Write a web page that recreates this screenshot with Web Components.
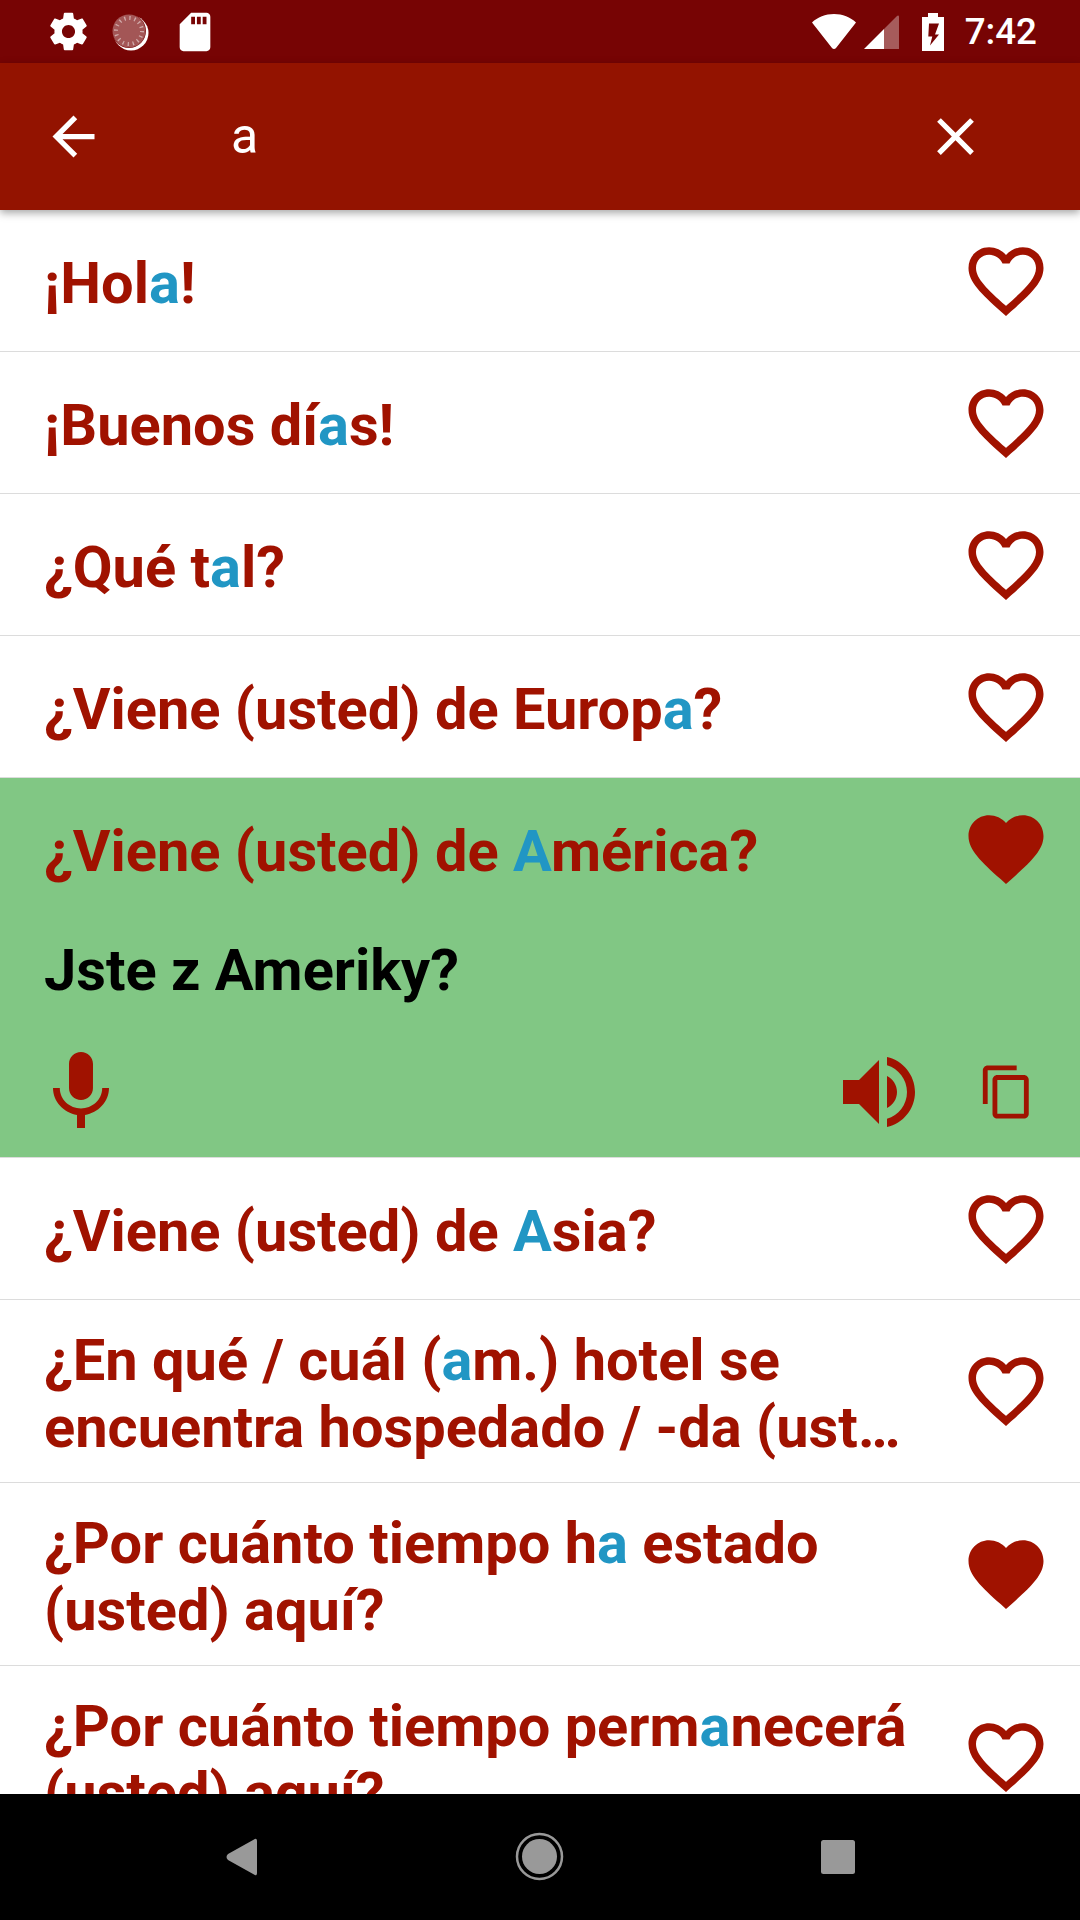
<!DOCTYPE html>
<html>
<head>
<meta charset="utf-8">
<title>Phrases</title>
<style>
html, body { margin: 0; padding: 0; background: #fff; }
body { font-family: Roboto, "Noto Sans", sans-serif; }
</style>
</head>
<body>
<phrase-app>
  <status-bar slot="status"></status-bar>
  <search-bar slot="search" query="a"></search-bar>

  <phrase-row>¡Hol<b>a</b>!</phrase-row>
  <phrase-row>¡Buenos dí<b>a</b>s!</phrase-row>
  <phrase-row>¿Qué t<b>a</b>l?</phrase-row>
  <phrase-row>¿Viene (usted) de Europ<b>a</b>?</phrase-row>
  <phrase-row selected liked translation="Jste z Ameriky?">¿Viene (usted) de <b>A</b>mérica?</phrase-row>
  <phrase-row>¿Viene (usted) de <b>A</b>sia?</phrase-row>
  <phrase-row>¿En qué / cuál (<b>a</b>m.) hotel se <i>encuentra hospedado / -da (usted)?</i></phrase-row>
  <phrase-row liked>¿Por cuánto tiempo h<b>a</b> estado (usted) aquí?</phrase-row>
  <phrase-row>¿Por cuánto tiempo perm<b>a</b>necerá (usted) aquí?</phrase-row>

  <nav-bar slot="nav"></nav-bar>
</phrase-app>

<script>
const ICONS = {
  gear: "M19.43 12.98c.04-.32.07-.64.07-.98s-.03-.66-.07-.98l2.11-1.65c.19-.15.24-.42.12-.64l-2-3.46c-.12-.22-.39-.3-.61-.22l-2.49 1c-.52-.4-1.08-.73-1.69-.98l-.38-2.65C14.46 2.18 14.25 2 14 2h-4c-.25 0-.46.18-.49.42l-.38 2.65c-.61.25-1.17.59-1.69.98l-2.49-1c-.23-.09-.49 0-.61.22l-2 3.46c-.13.22-.07.49.12.64l2.11 1.65c-.04.32-.07.65-.07.98s.03.66.07.98l-2.11 1.65c-.19.15-.24.42-.12.64l2 3.46c.12.22.39.3.61.22l2.49-1c.52.4 1.08.73 1.69.98l.38 2.65c.03.24.24.42.49.42h4c.25 0 .46-.18.49-.42l.38-2.65c.61-.25 1.17-.59 1.69-.98l2.49 1c.23.09.49 0 .61-.22l2-3.46c.12-.22.07-.49-.12-.64l-2.11-1.65zM12 15.5c-1.93 0-3.5-1.57-3.5-3.5s1.57-3.5 3.5-3.5 3.5 1.57 3.5 3.5-1.57 3.5-3.5 3.5z",
  sd: "M18 2h-8L4.02 8 4 20c0 1.1.9 2 2 2h12c1.1 0 2-.9 2-2V4c0-1.1-.9-2-2-2zm-6 6h-2V4h2v4zm3 0h-2V4h2v4zm3 0h-2V4h2v4z",
  back: "M20 11H7.83l5.59-5.59L12 4l-8 8 8 8 1.41-1.41L7.83 13H20v-2z",
  close: "M19 6.41L17.59 5 12 10.59 6.41 5 5 6.41 10.59 12 5 17.59 6.41 19 12 13.41 17.59 19 19 17.59 13.41 12z",
  heart: "M16.5 3c-1.74 0-3.41.81-4.5 2.09C10.91 3.81 9.24 3 7.5 3 4.42 3 2 5.42 2 8.5c0 3.78 3.4 6.86 8.55 11.54L12 21.35l1.45-1.32C18.6 15.36 22 12.28 22 8.5 22 5.42 19.58 3 16.5 3zm-4.4 15.55l-.1.1-.1-.1C7.14 14.24 4 11.39 4 8.5 4 6.5 5.5 5 7.5 5c1.54 0 3.04.99 3.57 2.36h1.87C13.46 5.99 14.96 5 16.5 5c2 0 3.5 1.5 3.5 3.5 0 2.89-3.14 5.74-7.9 10.05z",
  heartFull: "M12 21.35l-1.45-1.32C5.4 15.36 2 12.28 2 8.5 2 5.42 4.42 3 7.5 3c1.74 0 3.41.81 4.5 2.09C13.09 3.81 14.76 3 16.5 3 19.58 3 22 5.42 22 8.5c0 3.78-3.4 6.86-8.55 11.54L12 21.35z",
  mic: "M12 14c1.66 0 2.99-1.34 2.99-3L15 5c0-1.66-1.34-3-3-3S9 3.34 9 5v6c0 1.66 1.34 3 3 3zm5.3-3c0 3-2.54 5.1-5.3 5.1S6.7 14 6.7 11H5c0 3.41 2.72 6.23 6 6.72V21h2v-3.28c3.28-.48 6-3.3 6-6.72h-1.7z",
  speaker: "M3 9v6h4l5 5V4L7 9H3zm13.5 3c0-1.77-1.02-3.29-2.5-4.03v8.05c1.48-.73 2.5-2.25 2.5-4.02zM14 3.23v2.06c2.89.86 5 3.54 5 6.71s-2.11 5.85-5 6.71v2.06c4.01-.91 7-4.49 7-8.77s-2.99-7.86-7-8.77z",
  copy: "M16 1H4c-1.1 0-2 .9-2 2v14h2V3h12V1zm3 4H8c-1.1 0-2 .9-2 2v14c0 1.1.9 2 2 2h11c1.1 0 2-.9 2-2V7c0-1.1-.9-2-2-2zm0 16H8V7h11v14z"
};

class AppIcon extends HTMLElement {
  connectedCallback() {
    const size = this.getAttribute("size") || 24;
    const d = ICONS[this.getAttribute("name")];
    this.attachShadow({mode: "open"}).innerHTML = `
      <style>
        :host { display: block; flex: none; width: ${size}px; height: ${size}px; }
        svg { display: block; width: 100%; height: 100%; fill: currentColor; }
      </style>
      <svg viewBox="0 0 24 24"><path d="${d}"/></svg>`;
  }
}
customElements.define("app-icon", AppIcon);

class PhraseApp extends HTMLElement {
  constructor() {
    super();
    this.attachShadow({mode: "open"}).innerHTML = `
      <style>
        :host { display: flex; flex-direction: column; width: 1080px; height: 1920px; overflow: hidden; }
        .list { flex: 1; min-height: 0; overflow: hidden; }
      </style>
      <slot name="status"></slot>
      <slot name="search"></slot>
      <div class="list"><slot></slot></div>
      <slot name="nav"></slot>`;
  }
}
customElements.define("phrase-app", PhraseApp);

class StatusBar extends HTMLElement {
  constructor() {
    super();
    this.attachShadow({mode: "open"}).innerHTML = `
      <style>
        :host { display: flex; align-items: center; height: 63px; background: #770404; color: #fff; padding: 0 43px 0 46px; box-sizing: border-box; }
        .sync { width: 40px; height: 40px; margin-left: 20px; flex: none; }
        .sd { margin-left: 21px; }
        .spacer { flex: 1; }
        svg { display: block; flex: none; }
        .signal { margin-left: 8px; }
        .battery { margin-left: 23px; }
        .time { margin-left: 21px; font: 500 36.75px/63px Roboto, sans-serif; }
      </style>
      <app-icon name="gear" size="45"></app-icon>
      <svg class="sync" viewBox="0 0 40 40">
        <circle cx="20" cy="21" r="17.500" fill="#fff"/>
        <circle cx="18" cy="19" r="17" fill="#770404"/>
        <circle cx="18" cy="19" r="16.500" fill="#fff" opacity=".33"/>
        <circle cx="18" cy="19" r="13" fill="none" stroke="#fff" stroke-opacity=".5" stroke-width="4" stroke-dasharray="1.300 3.800"/>
      </svg>
      <app-icon class="sd" name="sd" size="46"></app-icon>
      <span class="spacer"></span>
      <svg width="44" height="36" viewBox="0 0 44 36"><path d="M0 8.500C5.500 3.200 13.500 0 22 0s16.500 3.200 22 8.500L24 34c-1 1.300-3 1.300-4 0z" fill="#fff"/></svg>
      <svg class="signal" width="35" height="36" viewBox="0 0 35 36">
        <path d="M0 35 20 15V35z" fill="#fff"/>
        <path d="M20 15 33 2c1-1 2-.500 2 1V35H20z" fill="#fff" opacity=".35"/>
      </svg>
      <svg class="battery" width="22" height="38" viewBox="0 0 22 38">
        <path d="M6 0h10v4h6v34H0V4h6zM7 10.500H17L13 21.500h4L8 32.500l2.300-9H6.300z" fill="#fff" fill-rule="evenodd"/>
      </svg>
      <span class="time">7:42</span>`;
  }
}
customElements.define("status-bar", StatusBar);

class SearchBar extends HTMLElement {
  connectedCallback() {
    this.attachShadow({mode: "open"}).innerHTML = `
      <style>
        :host { display: flex; align-items: center; position: relative; z-index: 2; height: 147px; background: #931300; color: #fff; padding: 0 93px 0 42px; box-sizing: border-box; box-shadow: 0 3px 8px rgba(0,0,0,.35); }
        .query { flex: 1; margin-left: 126px; font: 400 50px/149px Roboto, sans-serif; }
      </style>
      <app-icon name="back" size="63"></app-icon>
      <span class="query">${this.getAttribute("query")}</span>
      <app-icon name="close" size="63"></app-icon>`;
  }
}
customElements.define("search-bar", SearchBar);

class PhraseRow extends HTMLElement {
  connectedCallback() {
    const selected = this.hasAttribute("selected");
    const heart = this.hasAttribute("liked") ? "heartFull" : "heart";
    const extra = selected ? `
      <div class="translation">${this.getAttribute("translation")}</div>
      <div class="actions">
        <app-icon class="mic" name="mic" size="96"></app-icon>
        <span class="spacer"></span>
        <app-icon name="speaker" size="96"></app-icon>
        <app-icon class="copy" name="copy" size="58"></app-icon>
      </div>` : "";
    this.attachShadow({mode: "open"}).innerHTML = `
      <style>
        :host { display: block; background: #fff; color: #a01200; border-bottom: 1px solid #dcdcdc; box-sizing: border-box; }
        :host([selected]) { background: #81c784; }
        .head { display: flex; align-items: center; min-height: 141px; padding: 0 29px 0 44px; box-sizing: border-box; }
        .text { flex: 1; min-width: 0; margin: 27px 44px 21px 0; font: 700 57.75px/67px Roboto, sans-serif; }
        ::slotted(b) { color: #2196c4; font-weight: inherit; }
        /* second line of a long phrase stops with an ellipsis, mid word like on Android */
        ::slotted(i) { display: block; font-style: normal; white-space: nowrap; overflow: hidden; text-overflow: ellipsis; }
        .translation { padding: 0 44px; height: 102px; font: 700 57.75px/102px Roboto, sans-serif; color: #000; }
        .actions { display: flex; align-items: center; height: 136px; padding: 5px 44px 0 0; box-sizing: border-box; }
        .mic { margin-left: 33px; }
        .spacer { flex: 1; }
        .copy { margin-left: 51px; }
      </style>
      <div class="head">
        <div class="text"><slot></slot></div>
        <app-icon name="${heart}" size="90"></app-icon>
      </div>${extra}`;
  }
}
customElements.define("phrase-row", PhraseRow);

class NavBar extends HTMLElement {
  constructor() {
    super();
    this.attachShadow({mode: "open"}).innerHTML = `
      <style>
        :host { display: block; flex: none; height: 126px; background: #000; }
        svg { display: block; width: 1080px; height: 126px; }
      </style>
      <svg viewBox="0 0 1080 126">
        <path d="M254 45.500c1.500-1.500 3-.8 3 1.500v32c0 2.300-1.500 3-3 1.500L228 66c-2-2-2-4 0-6z" fill="#999"/>
        <circle cx="539.500" cy="62.500" r="22.500" fill="none" stroke="#999" stroke-width="2.500"/>
        <circle cx="539.500" cy="62.500" r="17.500" fill="#999"/>
        <rect x="821" y="46" width="34" height="34" rx="2.500" fill="#999"/>
      </svg>`;
  }
}
customElements.define("nav-bar", NavBar);
</script>
</body>
</html>
